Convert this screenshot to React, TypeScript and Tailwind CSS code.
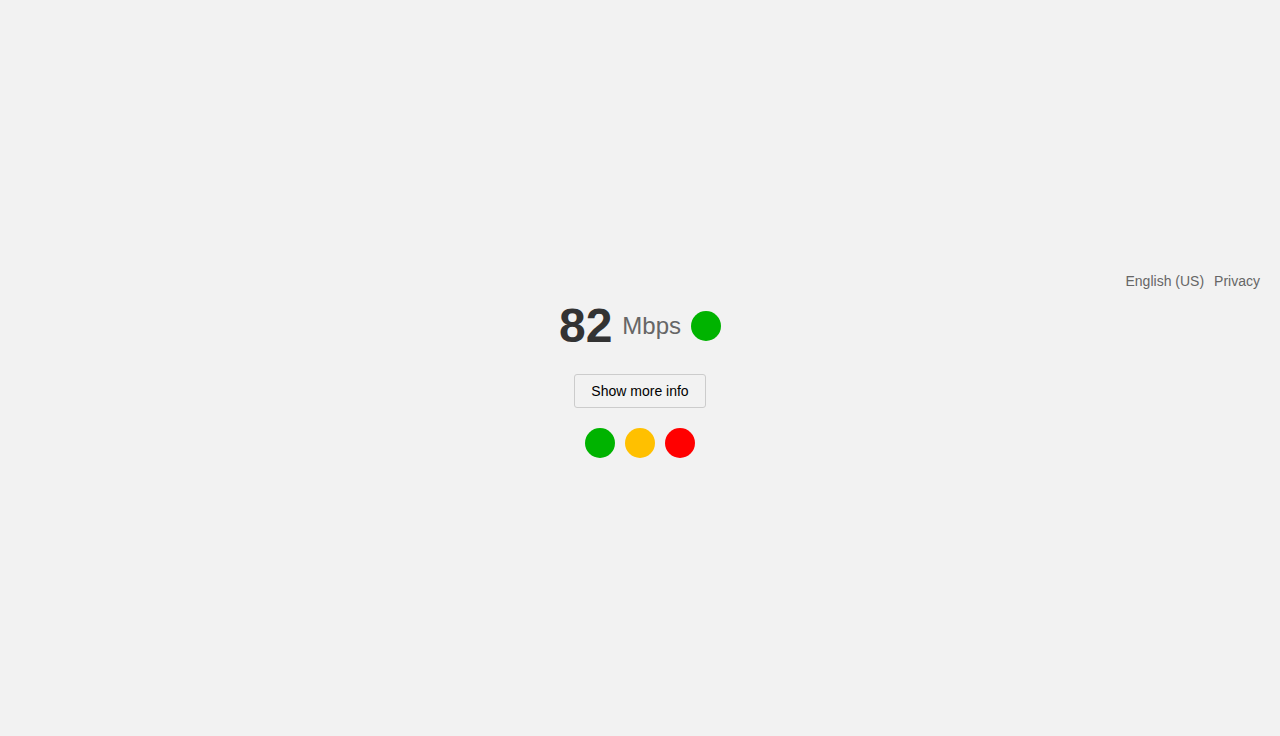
const Dot = ({ color }: { color: string }) => (
  <span className={`block h-[30px] w-[30px] rounded-full ${color}`} />
);

export default function App() {
  return (
    <div className="flex h-screen w-full flex-col justify-center bg-[#f2f2f2] pb-[7px] font-['Liberation_Sans',Arial,sans-serif]">
      {/* Links */}
      <div className="flex justify-end gap-2.5 pr-5 text-sm leading-5 text-[#666]">
        <a href="#">English (US)</a>
        <a href="#">Privacy</a>
      </div>

      {/* Speed */}
      <div className="mt-[11px] flex items-center justify-center gap-2.5">
        <span className="text-[48px] font-bold leading-none text-[#333]">82</span>
        <span className="text-[24px] leading-none text-[#666]">Mbps</span>
        <Dot color="bg-[#00b300]" />
      </div>

      <div className="mt-6 flex justify-center">
        <button className="h-[34px] rounded-[3px] border border-[#ccc] bg-[#f2f2f2] px-4 text-sm text-black">
          Show more info
        </button>
      </div>

      <div className="mt-5 flex justify-center gap-2.5">
        <Dot color="bg-[#00b300]" />
        <Dot color="bg-[#ffc000]" />
        <Dot color="bg-[#ff0000]" />
      </div>
    </div>
  );
}
